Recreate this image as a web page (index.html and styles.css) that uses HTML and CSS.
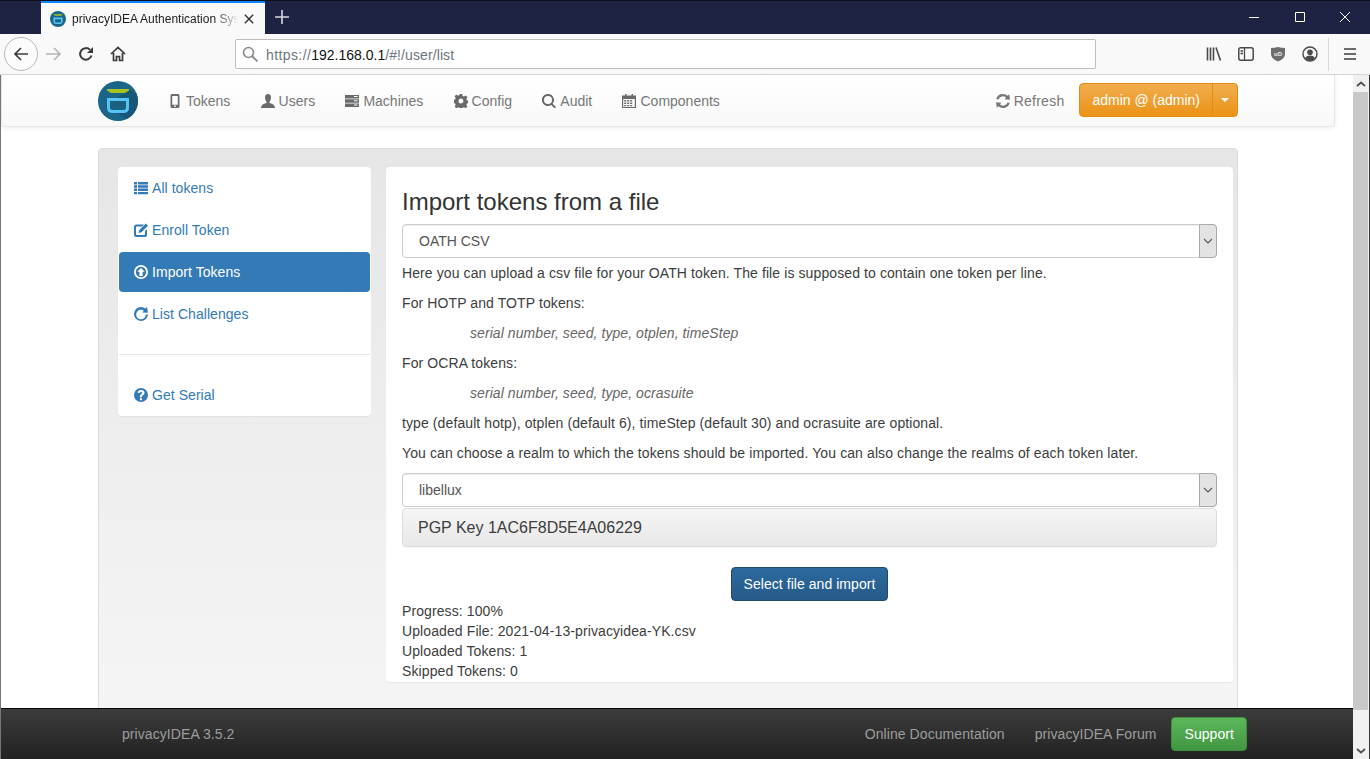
FILE: index.html

```html
<!DOCTYPE html>
<html lang="en">
<head>
    <meta charset="UTF-8">
    <title>privacyIDEA Authentication System</title>
    <link rel="stylesheet" href="styles.css">
</head>
<body>
<div class="titlebar">
    <div class="tab">
        <svg class="tab-logo" viewBox="0 0 40 40"><circle cx="20" cy="20" r="20" fill="#1b6688"/><path d="M9 8h22v1.500l-4 2.500H13l-4-2.500z" fill="#a8c41c"/><path d="M10.500 18.500h19v8q0 4-4 4h-11q-4 0-4-4z" fill="none" stroke="#56c5f5" stroke-width="4"/></svg>
        <span class="tab-title">privacyIDEA Authentication Sys</span>
        <svg class="tab-close" viewBox="0 0 12 12"><path d="M1 1l10 10M11 1L1 11" stroke="#333" stroke-width="1.700"/></svg>
    </div>
    <svg class="newtab" viewBox="0 0 14 14"><path d="M7 0v14M0 7h14" stroke="#d8d9e0" stroke-width="1.600"/></svg>
    <div class="window-btns">
        <svg viewBox="0 0 12 12"><path d="M2 6.500h10" stroke="#fff"/></svg>
        <svg viewBox="0 0 12 12"><path d="M2.500 1.500h9v9h-9z" fill="none" stroke="#fff"/></svg>
        <svg viewBox="0 0 12 12"><path d="M1 1l10 10M11 1L1 11" stroke="#fff"/></svg>
    </div>
</div>
<div class="toolbar">
    <div class="back-btn">
        <svg viewBox="0 0 16 16"><path d="M15 8H2M8 2L2 8l6 6" fill="none" stroke="#3c3c3c" stroke-width="1.700"/></svg>
    </div>
    <svg class="tool-icon fwd" viewBox="0 0 16 16"><path d="M0 8h14M8 2l6 6-6 6" fill="none" stroke="#b4b4b4" stroke-width="1.600"/></svg>
    <svg class="tool-icon reload" viewBox="0 0 16 16"><path d="M13.500 9.500A5.800 5.800 0 1 1 12 3.800" fill="none" stroke="#3c3c3c" stroke-width="2"/><path d="M15 1v6H9z" fill="#3c3c3c"/></svg>
    <svg class="tool-icon home" viewBox="0 0 16 16"><path d="M1 8l7-6.500L15 8M3.500 7v7.500h3v-4h3v4h3V7" fill="none" stroke="#3c3c3c" stroke-width="1.700"/></svg>
    <div class="urlbar">
        <svg viewBox="0 0 16 16"><circle cx="6.500" cy="6.500" r="5" fill="none" stroke="#8a8a8a" stroke-width="1.600"/><path d="M10 10l5.500 5.500" stroke="#8a8a8a" stroke-width="1.800"/></svg>
        <span class="url-text"><span class="url-scheme">https://</span><span class="url-host">192.168.0.1</span><span class="url-path">/#!/user/list</span></span>
    </div>
    <div class="toolbar-right">
        <svg viewBox="0 0 16 16"><path d="M1.500 1.500v13M4.500 1.500v13M7.500 1.500v13M10 1.500l4.500 13" fill="none" stroke="#4a4a4a" stroke-width="1.600"/></svg>
        <svg viewBox="0 0 16 16"><rect x=".8" y="1.800" width="14.400" height="12.400" rx="2" fill="none" stroke="#4a4a4a" stroke-width="1.500"/><path d="M6.500 2v12M2.500 5h2.500M2.500 7.500h2.500" stroke="#4a4a4a" stroke-width="1.300"/></svg>
        <svg viewBox="0 0 16 16"><path d="M1 2q3.500 0 7-1 3.500 1 7 1v6q0 5-7 7.500Q1 13 1 8z" fill="#6e6e6e"/><text x="8" y="9.500" class="ublock-text">uD</text></svg>
        <svg class="account" viewBox="0 0 16 16"><circle cx="8" cy="8" r="7" fill="none" stroke="#4a4a4a" stroke-width="1.400"/><circle cx="8" cy="6.200" r="2.800" fill="#4a4a4a"/><path d="M3 12.500q1-3 5-3t5 3Q10.500 15 8 15t-5-2.500z" fill="#4a4a4a"/></svg>
        <span class="toolbar-sep"></span>
        <svg class="hamburger" viewBox="0 0 12 12"><path d="M0 1h12M0 6h12M0 11h12" stroke="#3c3c3c" stroke-width="1.600"/></svg>
    </div>
</div>
<div class="viewport">
    <div class="page">
        <nav class="navbar">
            <div class="logo">
                <svg viewBox="0 0 40 40">
                    <circle cx="20" cy="20" r="20" fill="#1b6688"/>
                    <path d="M31 9l7.500 3.500A20 20 0 0 1 28 38.300L8 24z" fill="#17587a"/>
                    <path d="M9 8h22v1.500l-4 2.500H13l-4-2.500z" fill="#a8c41c"/>
                    <path d="M10.500 18.500h19v8q0 4-4 4h-11q-4 0-4-4z" fill="#1b6080" stroke="#56c5f5" stroke-width="3"/>
                </svg>
            </div>
            <ul class="nav-links">
                <li><svg class="gi" viewBox="0 0 14 14"><path fill-rule="evenodd" d="M4 0h6q1.500 0 1.500 1.500v11q0 1.500-1.500 1.500H4q-1.500 0-1.500-1.500v-11Q2.500 0 4 0zm.2 2v8.700h5.600V2zM7 11.300a.9.9 0 1 0 0 1.800.9.9 0 0 0 0-1.800z"/></svg>Tokens</li>
                <li><svg class="gi" viewBox="0 0 14 14"><path d="M7 0q3 0 3 3.500 0 2.500-1.500 4.200v1.300Q14 10 14 14H0q0-4 5.500-5V7.700Q4 6 4 3.500 4 0 7 0z"/></svg>Users</li>
                <li><svg class="gi" viewBox="0 0 14 14"><path fill-rule="evenodd" d="M0 1h14v3.400H0zm9 1v1h3.500V2zM0 5.300h14v3.400H0zm9 1v1h3.500v-1zM0 9.600h14V13H0zm9 1v1h3.500v-1z"/></svg>Machines</li>
                <li><svg class="gi" viewBox="0 0 14 14"><path fill-rule="evenodd" d="M5.800 0h2.400l.4 2 1.400.6 1.700-1.100 1.700 1.700-1.100 1.700.6 1.400 2 .4v2.400l-2 .4-.6 1.400 1.100 1.700-1.700 1.700-1.700-1.100-1.400.6-.4 2H5.800l-.4-2-1.400-.6-1.700 1.100-1.700-1.700 1.100-1.700-.6-1.400-2-.4V5.800l2-.4.6-1.400-1.100-1.700 1.700-1.700L4 1.700l1.400-.6zM7 4.500a2.500 2.500 0 1 0 0 5 2.500 2.500 0 0 0 0-5z"/></svg>Config</li>
                <li><svg class="gi" viewBox="0 0 14 14"><path fill-rule="evenodd" d="M6 0a6 6 0 0 1 4.700 9.700L14 13l-1.500 1.300-3.300-3.300A6 6 0 1 1 6 0zm0 2a4 4 0 1 0 0 8 4 4 0 0 0 0-8z"/></svg>Audit</li>
                <li><svg class="gi" viewBox="0 0 14 14"><path fill-rule="evenodd" d="M3 0h1.500v1.500h5V0H11v1.500h3V14H0V1.500h3zM1.200 5v8h11.600V5zm1 1h2v1.500h-2zm3 0h2v1.500h-2zm3 0h2v1.500h-2zm-6 2.500h2V10h-2zm3 0h2V10h-2zm3 0h2V10h-2zM2.200 11h2v1.300h-2zm3 0h2v1.300h-2zm3 0h2v1.300h-2z"/></svg>Components</li>
            </ul>
            <div class="nav-right">
                <span class="refresh"><svg class="gi" viewBox="0 0 14 14"><path d="M7 0a7 7 0 0 1 4.600 1.800L13.200.3 14 5.800 8.500 5.300l1.600-1.600A4.600 4.600 0 0 0 2.500 5.500L.2 5A7 7 0 0 1 7 0zM0 8.200l5.500.5-1.600 1.600a4.600 4.600 0 0 0 7.600-1.800l2.300.5A7 7 0 0 1 2.400 12.200L.8 13.700z"/></svg>Refresh</span>
                <div class="btn-group">
                    <span class="btn-admin">admin @ (admin)</span>
                    <span class="btn-caret"><i class="caret"></i></span>
                </div>
            </div>
        </nav>
        <div class="well">
            <aside class="sidebar">
                <ul class="side-nav">
                    <li><a><svg class="gi" viewBox="0 0 14 14"><path d="M0 1h3v2.400H0zM4 1h10v2.400H4zM0 4.300h3v2.400H0zM4 4.300h10v2.400H4zM0 7.600h3V10H0zM4 7.600h10V10H4zM0 10.900h3v2.400H0zM4 10.900h10v2.400H4z"/></svg>All tokens</a></li>
                    <li><a><svg class="gi" viewBox="0 0 14 14"><path d="M2.500 1.500h7.500L8.200 3.500H3q-1 0-1 1v6.500q0 1 1 1h7q1 0 1-1V8l2-2v6q0 2-2 2H2.500q-2.500 0-2.500-2.500V4q0-2.500 2.500-2.500z"/><path d="M11.800.5l2.200 2.200L7.500 9.200l-3 .8.800-3z"/></svg>Enroll Token</a></li>
                    <li class="active"><a><svg class="gi" viewBox="0 0 14 14"><path fill-rule="evenodd" d="M7 0a7 7 0 1 1 0 14A7 7 0 0 1 7 0zm0 1.800a5.200 5.200 0 1 0 0 10.400A5.200 5.200 0 0 0 7 1.800zM7 3l3.800 3.800H8.600V11H5.400V6.800H3.200z"/></svg>Import Tokens</a></li>
                    <li><a><svg class="gi" viewBox="0 0 14 14"><path d="M7 0a7 7 0 0 1 4.400 1.600L13 0l1 5.800-5.800-.3 1.700-1.800A4.800 4.800 0 1 0 11.800 7.500H14A7 7 0 1 1 7 0z"/></svg>List Challenges</a></li>
                    <li class="divider"></li>
                    <li><a><svg class="gi" viewBox="0 0 14 14"><path fill-rule="evenodd" d="M7 0a7 7 0 1 1 0 14A7 7 0 0 1 7 0zM5.900 10.200v2h2.200v-2zM7 2C5 2 3.800 3 3.600 4.800l2 .3Q5.800 3.900 7 3.900q1.200 0 1.200 1 0 .6-.9 1.200Q5.900 7 5.900 8.200v1h2.200v-.7q0-.7.900-1.300 1.500-1 1.500-2.500Q10.500 2 7 2z"/></svg>Get Serial</a></li>
                </ul>
            </aside>
            <section class="content">
                <h2>Import tokens from a file</h2>
                <div class="fake-select">
                    <span>OATH CSV</span>
                    <span class="select-arrow"><svg viewBox="0 0 10 6"><path d="M1 1l4 4 4-4" fill="none" stroke="#555" stroke-width="1.100"/></svg></span>
                </div>
                <p>Here you can upload a csv file for your OATH token. The file is supposed to contain one token per line.</p>
                <p>For HOTP and TOTP tokens:</p>
                <p class="format">serial number, seed, type, otplen, timeStep</p>
                <p>For OCRA tokens:</p>
                <p class="format">serial number, seed, type, ocrasuite</p>
                <p>type (default hotp), otplen (default 6), timeStep (default 30) and ocrasuite are optional.</p>
                <p>You can choose a realm to which the tokens should be imported. You can also change the realms of each token later.</p>
                <div class="fake-select realm">
                    <span>libellux</span>
                    <span class="select-arrow"><svg viewBox="0 0 10 6"><path d="M1 1l4 4 4-4" fill="none" stroke="#555" stroke-width="1.100"/></svg></span>
                </div>
                <div class="pgp-panel">PGP Key 1AC6F8D5E4A06229</div>
                <div class="import-row"><span class="btn-import">Select file and import</span></div>
                <div class="status">
                    <div>Progress: 100%</div>
                    <div>Uploaded File: 2021-04-13-privacyidea-YK.csv</div>
                    <div>Uploaded Tokens: 1</div>
                    <div>Skipped Tokens: 0</div>
                </div>
            </section>
        </div>
        <footer class="footer">
            <span class="version">privacyIDEA 3.5.2</span>
            <span class="foot-link">Online Documentation</span>
            <span class="foot-link">privacyIDEA Forum</span>
            <span class="btn-support">Support</span>
        </footer>
    </div>
    <div class="scrollbar">
        <span class="scroll-btn"><svg viewBox="0 0 10 6"><path d="M1 5l4-3.500L9 5" fill="none" stroke="#505050" stroke-width="1.800"/></svg></span>
        <div class="scroll-thumb"></div>
        <div class="scroll-track"></div>
        <span class="scroll-btn"><svg viewBox="0 0 10 6"><path d="M1 1l4 3.500L9 1" fill="none" stroke="#505050" stroke-width="1.800"/></svg></span>
    </div>
</div>
</body>
</html>
```

FILE: styles.css

```css
* {
    box-sizing: border-box;
}
html, body {
    margin: 0;
    height: 759px;
    overflow: hidden;
}
body {
    font-family: "Liberation Sans", Arial, sans-serif;
    font-size: 14px;
    line-height: 20px;
    color: #3d3d3d;
    display: flex;
    flex-direction: column;
    background: #fff;
}

/* browser chrome */
.titlebar {
    height: 34px;
    flex: none;
    background: #1f2343;
    border-top: 1px solid #0d0f1c;
    display: flex;
    align-items: stretch;
    padding-left: 41px;
}
.tab {
    width: 224px;
    background: #f9f9fa;
    border-top: 2px solid #0a84ff;
    display: flex;
    align-items: center;
    padding: 0 12px 0 9px;
    color: #1c1c1c;
    font-size: 12px;
}
.tab-logo {
    width: 16px;
    height: 16px;
    flex: none;
    margin-right: 6px;
}
.tab-title {
    flex: 1;
    white-space: nowrap;
    -webkit-mask-image: linear-gradient(to right, #000 85%, transparent);
    mask-image: linear-gradient(to right, #000 85%, transparent);
}
.tab-close {
    width: 10px;
    height: 10px;
    flex: none;
    margin-left: 5px;
}
.newtab {
    width: 14px;
    height: 14px;
    margin: 9px 0 0 10px;
}
.window-btns {
    margin-left: auto;
    display: flex;
    align-items: center;
    gap: 34px;
    padding: 0 19px 1px 0;
}
.window-btns svg {
    width: 12px;
    height: 12px;
}
.toolbar {
    height: 41px;
    flex: none;
    background: #f9f9fa;
    border-bottom: 1px solid #d6d6d8;
    display: flex;
    align-items: center;
    padding-left: 4px;
}
.back-btn {
    width: 34px;
    height: 34px;
    border: 1px solid #b8b8b8;
    border-radius: 50%;
    background: #fcfcfc;
    display: flex;
    align-items: center;
    justify-content: center;
}
.back-btn svg {
    width: 16px;
    height: 16px;
}
.tool-icon {
    width: 16px;
    height: 16px;
    flex: none;
}
.fwd {
    margin-left: 8px;
}
.reload {
    margin-left: 16px;
}
.home {
    margin-left: 16px;
}
.urlbar {
    width: 861px;
    height: 30px;
    margin-left: 109px;
    background: #fff;
    border: 1px solid #bebebe;
    border-radius: 2px;
    display: flex;
    align-items: center;
    padding-left: 6px;
}
.urlbar svg {
    width: 16px;
    height: 16px;
    margin-right: 8px;
}
.url-text {
    padding-top: 2px;
}
.url-scheme {
    color: #6e7580;
    letter-spacing: .4px;
}
.url-path {
    color: #6e7580;
    letter-spacing: .1px;
}
.url-host {
    color: #111;
}
.toolbar-right {
    margin-left: 110px;
    display: flex;
    align-items: center;
}
.toolbar-right svg {
    width: 16px;
    height: 16px;
    margin-right: 16px;
}
.toolbar-right .account {
    margin-right: 10px;
}
.toolbar-right .hamburger {
    width: 12px;
    height: 12px;
    margin-right: 0;
}
.ublock-text {
    font-size: 6px;
    fill: #f0f0f0;
    text-anchor: middle;
    font-weight: bold;
}
.toolbar-sep {
    width: 1px;
    height: 33px;
    background: #d8d8d8;
    margin-right: 15px;
}

/* page */
.viewport {
    flex: 1;
    min-height: 0;
    display: flex;
}
.page {
    flex: 1;
    min-width: 0;
    position: relative;
    overflow: hidden;
    border-left: 1px solid #777;
}
.navbar {
    width: 1334px;
    height: 52px;
    background: linear-gradient(to bottom, #fff, #f8f8f8);
    border: 1px solid #e7e7e7;
    border-top: none;
    border-radius: 0 0 4px 4px;
    box-shadow: 0 1px 5px rgba(0, 0, 0, .08);
    display: flex;
    align-items: center;
    padding-left: 96px;
}
.logo {
    width: 40px;
    height: 40px;
    margin-top: 1px;
}
.logo svg {
    width: 40px;
    height: 40px;
    display: block;
}
.nav-links {
    list-style: none;
    margin: 0 0 0 30px;
    padding: 0;
    display: flex;
    gap: 30.25px;
    color: #777;
}
.nav-links li {
    display: flex;
    align-items: center;
}
.gi {
    width: 14px;
    height: 14px;
    fill: currentColor;
    flex: none;
    margin-right: 4px;
}
.nav-links .gi {
    color: #6a6a6a;
}
.nav-right {
    margin-left: auto;
    margin-right: 96px;
    display: flex;
    align-items: center;
    gap: 15px;
    color: #777;
}
.refresh {
    display: flex;
    align-items: center;
    letter-spacing: .25px;
}
.btn-group {
    display: flex;
    height: 34px;
    margin-top: -2px;
    color: #fff;
    border: 1px solid #e38d13;
    border-radius: 4px;
    background: linear-gradient(to bottom, #f0ad4e, #eb9316);
}
.btn-admin {
    padding: 6px 12px;
    border-right: 1px solid #e38d13;
}
.btn-caret {
    width: 24px;
    display: flex;
    align-items: center;
    justify-content: center;
}
.caret {
    border-top: 4px solid #fff;
    border-left: 4px solid transparent;
    border-right: 4px solid transparent;
}
.well {
    width: 1140px;
    min-height: 570px;
    margin: 21px 0 0 97px;
    padding: 18px 4px 19px 19px;
    background: linear-gradient(to bottom, #e6e6e6, #f5f5f5);
    border: 1px solid #dcdcdc;
    border-radius: 4px;
    display: flex;
    align-items: flex-start;
    gap: 15px;
}
.sidebar {
    width: 253px;
    flex: none;
    background: #fff;
    border-radius: 4px;
    box-shadow: 0 1px 1px rgba(0, 0, 0, .05);
    padding: 1px;
}
.side-nav {
    list-style: none;
    margin: 0;
    padding: 0;
    color: #337ab7;
    letter-spacing: .05px;
}
.side-nav a {
    display: flex;
    align-items: center;
    height: 40px;
    padding: 0 15px;
    margin-bottom: 2px;
    border-radius: 4px;
}
.side-nav .active a {
    background: #337ab7;
    color: #fff;
}
.divider {
    height: 1px;
    background: #e5e5e5;
    margin: 20px 0;
}
.side-nav li:last-child a {
    margin-bottom: 0;
}
.content {
    flex: 1;
    min-width: 0;
    height: 515px;
    background: #fff;
    border-radius: 4px;
    box-shadow: 0 1px 1px rgba(0, 0, 0, .05);
    padding: 20px 16px 0;
    overflow: hidden;
    letter-spacing: .1px;
}
h2 {
    font-size: 24px;
    font-weight: 500;
    line-height: 26px;
    letter-spacing: 0;
    margin: 2px 0 9px;
    color: #333;
}
.fake-select {
    height: 34px;
    border: 1px solid #ccc;
    border-radius: 4px;
    box-shadow: inset 0 1px 1px rgba(0, 0, 0, .075);
    display: flex;
    justify-content: space-between;
    align-items: center;
    padding-left: 16px;
    color: #555;
    letter-spacing: 0;
    margin-bottom: 5px;
}
.select-arrow {
    width: 18px;
    height: 34px;
    margin-right: -1px;
    background: #e3e3e3;
    border: 1px solid #aaa;
    border-radius: 0 4px 4px 0;
    display: flex;
    align-items: center;
    justify-content: center;
}
.select-arrow svg {
    width: 10px;
    height: 6px;
}
.content p {
    margin: 0 0 10px;
}
.content .format {
    font-style: italic;
    padding-left: 68px;
    color: #666;
    letter-spacing: .07px;
}
.realm {
    margin-bottom: 1px;
}
.pgp-panel {
    height: 39px;
    background: linear-gradient(to bottom, #f5f5f5, #e8e8e8);
    border: 1px solid #ddd;
    border-radius: 4px;
    font-size: 16px;
    line-height: 37px;
    letter-spacing: 0;
    padding-left: 15px;
    box-shadow: 0 1px 1px rgba(0, 0, 0, .05);
}
.import-row {
    display: flex;
    justify-content: center;
    margin-top: 20px;
}
.btn-import {
    height: 34px;
    padding: 6px 12px;
    color: #fff;
    letter-spacing: .05px;
    background: linear-gradient(to bottom, #2b6a9f, #265a88);
    border: 1px solid #1f4a70;
    border-radius: 4px;
}
.footer {
    position: absolute;
    left: 0;
    right: 0;
    bottom: 0;
    height: 51px;
    background: linear-gradient(to bottom, #3c3c3c, #222);
    border-top: 1px solid #080808;
    display: flex;
    align-items: center;
    color: #9d9d9d;
    padding: 0 106px 0 121px;
    letter-spacing: .07px;
}
.version {
    margin-right: auto;
}
.foot-link {
    margin-right: 30px;
}
.foot-link + .foot-link {
    margin-right: 15px;
}
.btn-support {
    height: 34px;
    padding: 6px 12px;
    color: #fff;
    background: linear-gradient(to bottom, #5cb85c, #419641);
    border: 1px solid #3e8f3e;
    border-radius: 4px;
}
.scrollbar {
    width: 17px;
    flex: none;
    background: #f1f1f1;
    border-right: 1px solid #3a3a3a;
    padding-right: 1px;
    display: flex;
    flex-direction: column;
}
.scroll-btn {
    height: 17px;
    display: flex;
    align-items: center;
    justify-content: center;
    flex: none;
}
.scroll-btn svg {
    width: 10px;
    height: 6px;
}
.scroll-thumb {
    height: 618px;
    flex: none;
    background: #c8c8c8;
}
.scroll-track {
    flex: 1;
}
```
